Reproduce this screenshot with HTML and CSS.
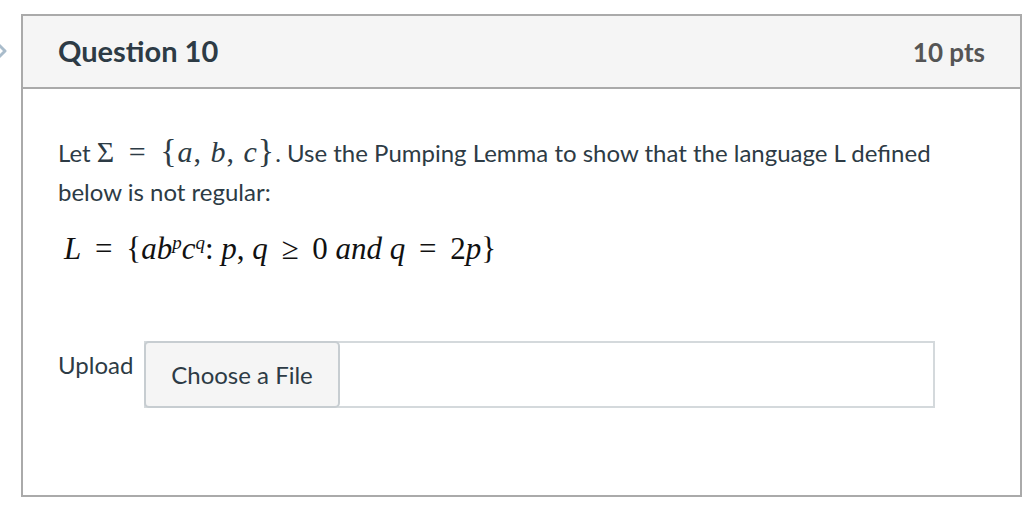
FILE: index.html
```html
<!DOCTYPE html>
<html>
<head>
<meta charset="utf-8">
<link rel="stylesheet" href="styles.css">
</head>
<body>
<svg class="nav-arrow" width="10" height="24" viewBox="0 0 10 24"><path d="M-4 3 L5 12 L-4 21" fill="none" stroke="#a9bccb" stroke-width="3" stroke-linejoin="round"/></svg>
<div class="card">
  <div class="card-header">
    <span class="q-title">Question 10</span>
    <span class="q-pts">10 pts</span>
  </div>
  <div class="card-body">
    <p class="q-text">Let <span class="math">Σ <span class="op">=</span> <span class="brace">{</span><i>a</i>, <i>b</i>, <i>c</i><span class="brace">}</span></span>. Use the Pumping Lemma to show that the language L defined below is not regular:</p>
    <p class="formula"><i>L</i> <span class="fop">=</span> {<i>ab</i><sup><i>p</i></sup><i>c</i><sup><i>q</i></sup>: <i>p</i>, <i>q</i> <span class="fop">≥</span> 0 <i>and</i> <i>q</i> <span class="fop">=</span> 2<i>p</i>}</p>
    <div class="upload-row">
      <span class="upload-label">Upload</span>
      <div class="file-box">
        <span class="file-btn">Choose a File</span>
      </div>
    </div>
  </div>
</div>
</body>
</html>
```
FILE: styles.css
```css
html, body {
  margin: 0;
  padding: 0;
  background: #fff;
}
body {
  font-family: Lato, "Noto Sans", sans-serif;
  color: #2d3b45;
  padding-top: 14px;
  padding-left: 21px;
  position: relative;
}
.nav-arrow {
  position: absolute;
  left: 0;
  top: 39px;
}
.card {
  width: 997px;
  height: 479px;
  border: 2px solid #aaaaaa;
  box-sizing: content-box;
}
.card-header {
  height: 71px;
  background: #f5f5f5;
  border-bottom: 2px solid #aaaaaa;
  display: flex;
  align-items: center;
  justify-content: space-between;
  padding: 0 35px 0 35px;
}
.q-title {
  font-size: 29px;
  font-weight: 700;
  color: #2d3b45;
  position: relative;
  top: -1px;
}
.q-pts {
  font-size: 26px;
  font-weight: 700;
  color: #555555;
}
.card-body {
  padding: 0 35px;
}
.q-text {
  margin: 44px 0 0 0;
  font-size: 24px;
  line-height: 39px;
  width: 900px;
}
.math {
  font-family: "Liberation Serif", "DejaVu Serif", serif;
  font-size: 30px;
  line-height: 0;
  letter-spacing: 1px;
}
.math i, .formula i {
  font-family: "Liberation Serif", "DejaVu Serif", serif;
}
.op {
  font-style: normal;
  margin: 0 5px;
}
.fop {
  margin: 0 6px;
}
.brace {
  font-size: 34px;
}
.formula {
  margin: 20px 0 0 6px;
  font-family: "Liberation Serif", "DejaVu Serif", serif;
  font-size: 31px;
  line-height: 36px;
  color: #111;
}
.formula sup {
  font-size: 19px;
  vertical-align: 10px;
  line-height: 0;
}
.upload-row {
  display: flex;
  align-items: flex-start;
  margin-top: 74px;
}
.upload-label {
  font-size: 24px;
  width: 86px;
  margin-top: 9px;
}
.file-box {
  width: 787px;
  height: 63px;
  border: 2px solid #d4d9dc;
  display: flex;
}
.file-btn {
  box-sizing: border-box;
  margin: -2px 0 0 -2px;
  height: 67px;
  width: 196px;
  background: #f5f5f5;
  border: 2px solid #c7cdd1;
  border-radius: 5px;
  font-size: 24px;
  display: flex;
  align-items: center;
  justify-content: center;
  color: #2d3b45;
}
```
